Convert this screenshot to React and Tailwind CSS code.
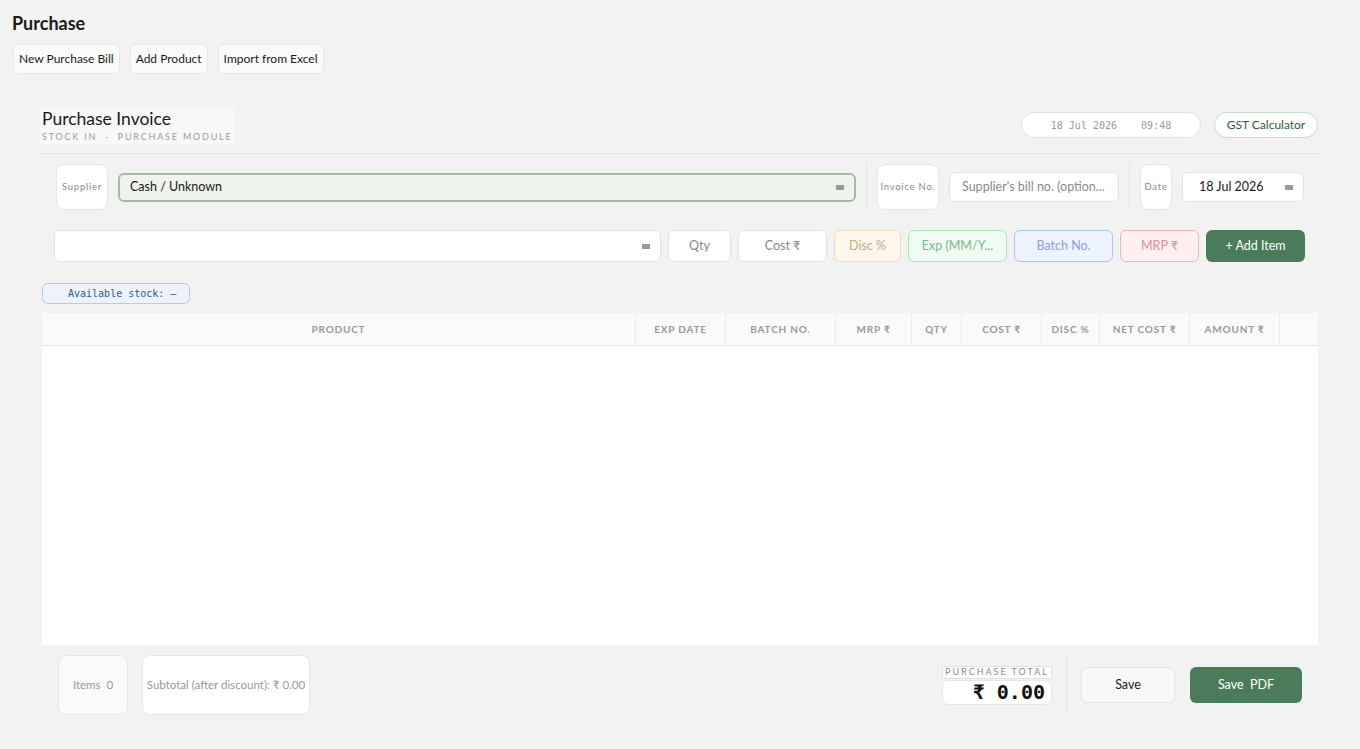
import React from 'react'

const sans = { fontFamily: 'Lato, "Noto Sans", sans-serif' }
const mono = { fontFamily: '"DejaVu Sans Mono", monospace' }

function SelectBar() {
  return <span className="ml-auto h-[5px] w-[8px] shrink-0 bg-[#9a9a9a]" />
}

function LabelBox({ children, w }) {
  return (
    <div className={`flex h-[46px] ${w} shrink-0 items-center justify-center rounded-lg border border-[#e6e6e6] bg-white text-[9.5px] tracking-[0.08em] text-[#8a8a8a]`}>
      {children}
    </div>
  )
}

function ItemInput({ children, w, cls }) {
  return (
    <div className={`flex h-[32px] ${w} shrink-0 items-center justify-center whitespace-nowrap rounded-md border text-[12.5px] ${cls}`}>
      {children}
    </div>
  )
}

const cols = [
  ['PRODUCT', 'w-[594px]'],
  ['EXP DATE', 'w-[90px]'],
  ['BATCH NO.', 'w-[110px]'],
  ['MRP ₹', 'w-[76px]'],
  ['QTY', 'w-[50px]'],
  ['COST ₹', 'w-[80px]'],
  ['DISC %', 'w-[58px]'],
  ['NET COST ₹', 'w-[90px]'],
  ['AMOUNT ₹', 'w-[90px]'],
  ['', 'flex-1'],
]

function App() {
  return (
    <div className="min-h-screen bg-[#f2f2f2] text-[#1a1a1a]" style={sans}>
      <div className="px-3 pt-[11px]">
        <h1 className="text-[18px] font-bold leading-6">Purchase</h1>
        <div className="mt-[9px] flex gap-[10px] pl-[1px]">
          {['New Purchase Bill', 'Add Product', 'Import from Excel'].map((t) => (
            <button key={t} className="h-[30px] rounded-md border border-[#e8e8e8] bg-[#fafafa] px-[5px] text-[12px]">
              {t}
            </button>
          ))}
        </div>
      </div>

      <div className="mx-[42px] mt-[33px]">
        <div className="flex items-start justify-between border-b border-[#e2e2e2] pb-[9px]">
          <div className="-ml-[2px] bg-[#f8f8f8] px-[2px] pt-[1px] pb-[1px]">
            <div className="text-[17.5px] leading-[22px] text-[#1a1a1a]">Purchase Invoice</div>
            <div className="text-[9px] leading-[13px] tracking-[0.2em] text-[#9a9a9a]">STOCK IN &nbsp;·&nbsp; PURCHASE MODULE</div>
          </div>
          <div className="mt-[5px] flex items-center gap-[13px]">
            <div className="flex h-[26px] w-[180px] items-center justify-center whitespace-pre rounded-full border border-[#e2e2e2] bg-white text-[10px] text-[#999]" style={mono}>
              {'18 Jul 2026    09:48'}
            </div>
            <div className="flex h-[26px] w-[104px] items-center justify-center rounded-full border border-[#c6dcc6] bg-white text-[12px] text-[#2f5d3a]">
              GST Calculator
            </div>
          </div>
        </div>

        <div className="mt-[10px] flex items-center pl-[14px]">
          <LabelBox w="w-[52px]">Supplier</LabelBox>
          <div className="ml-[10px] flex h-[29px] w-[738px] items-center rounded-md border-2 border-[#a3bd9f] bg-[#eef3ec] pl-[10px] pr-[10px] text-[12.5px]">
            Cash / Unknown
            <SelectBar />
          </div>
          <div className="mx-[10px] h-[46px] w-px bg-[#e2e2e2]" />
          <LabelBox w="w-[62px]">Invoice No.</LabelBox>
          <div className="ml-[10px] flex h-[30px] w-[170px] items-center overflow-hidden whitespace-nowrap rounded-md border border-[#e2e2e2] bg-white px-[12px] text-[12.5px] text-[#8a8a8a]">
            Supplier's bill no. (option...
          </div>
          <div className="mx-[10px] h-[46px] w-px bg-[#e2e2e2]" />
          <LabelBox w="w-[32px]">Date</LabelBox>
          <div className="ml-[10px] flex h-[30px] w-[122px] items-center rounded-md border border-[#e2e2e2] bg-white pl-[16px] pr-[10px] text-[12.5px]">
            18 Jul 2026
            <SelectBar />
          </div>
        </div>

        <div className="mt-[20px] flex items-center gap-[7px] pl-[12px]">
          <div className="flex h-[32px] w-[607px] shrink-0 items-center rounded-md border border-[#e2e2e2] bg-white pr-[10px]">
            <SelectBar />
          </div>
          <ItemInput w="w-[63px]" cls="border-[#e2e2e2] bg-white text-[#888]">Qty</ItemInput>
          <ItemInput w="w-[89px]" cls="border-[#e2e2e2] bg-white text-[#888]">Cost ₹</ItemInput>
          <ItemInput w="w-[67px]" cls="border-[#efdcb6] bg-[#fdf7ee] text-[#c9a77a]">Disc %</ItemInput>
          <ItemInput w="w-[99px]" cls="border-[#a8e6b8] bg-[#f0fbf2] text-[#7cb88c]">Exp (MM/Y...</ItemInput>
          <ItemInput w="w-[99px]" cls="border-[#a9c8f3] bg-[#eef4ff] text-[#8a9ee0]">Batch No.</ItemInput>
          <ItemInput w="w-[79px]" cls="border-[#f3b3b6] bg-[#fff0f0] text-[#e28a98]">MRP ₹</ItemInput>
          <button className="flex h-[32px] w-[99px] shrink-0 items-center justify-center rounded-md bg-[#4a7c59] text-[12.5px] text-white">
            + Add Item
          </button>
        </div>

        <div className="mt-[21px] flex">
          <div className="flex h-[21px] w-[148px] items-center whitespace-nowrap rounded-md border border-[#b9cbe2] bg-[#eef3fb] pl-[25px] text-[10px] text-[#2d5a9a]" style={mono}>
            Available stock: –
          </div>
        </div>

        <div className="mt-[9px] h-[332px] bg-white">
          <div className="flex h-[33px] border-b border-[#e6e6e6] bg-[#fafafa]">
            {cols.map(([t, w], i) => (
              <div key={i} className={`flex ${w} items-center justify-center whitespace-nowrap border-r border-[#ececec] text-[10px] font-bold tracking-[0.08em] text-[#999] last:border-r-0`}>
                {t}
              </div>
            ))}
          </div>
        </div>

        <div className="mt-[10px] flex items-center pl-[16px]">
          <div className="flex h-[60px] w-[70px] items-center justify-center rounded-lg border border-[#e6e6e6] bg-[#fafafa] text-[11.5px] text-[#999]">
            Items&nbsp; 0
          </div>
          <div className="ml-[14px] flex h-[60px] w-[168px] items-center justify-center whitespace-nowrap rounded-lg border border-[#e6e6e6] bg-white text-[11.5px] text-[#999]">
            Subtotal (after discount): ₹ 0.00
          </div>
          <div className="ml-auto flex items-center pr-[16px]">
            <div className="flex flex-col">
              <div className="flex h-[13px] w-[110px] items-center justify-center border border-[#e2e2e2] bg-white text-[9px] tracking-[0.22em] text-[#8a8a8a]">
                PURCHASE TOTAL
              </div>
              <div className="mt-[1px] flex h-[25px] w-[110px] items-center justify-end rounded-md border border-[#e6e6e6] bg-white pr-[6px] text-[20px] font-bold text-[#111]" style={mono}>
                ₹ 0.00
              </div>
            </div>
            <div className="mx-[14px] h-[57px] w-px bg-[#e2e2e2]" />
            <button className="h-[36px] w-[94px] rounded-md border border-[#e2e2e2] bg-[#f8f8f8] text-[12.5px]">Save</button>
            <button className="ml-[15px] h-[36px] w-[112px] rounded-md bg-[#4a7c59] text-[12.5px] text-white">Save&nbsp; PDF</button>
          </div>
        </div>
      </div>
    </div>
  )
}

export default App
